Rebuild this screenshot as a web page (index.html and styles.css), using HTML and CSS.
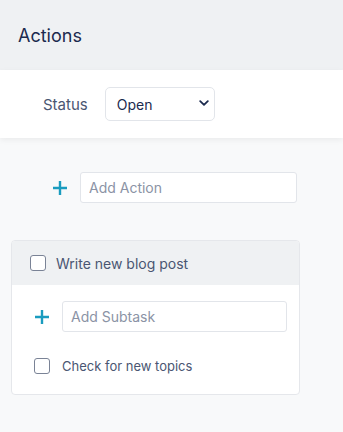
FILE: index.html
```html
<!DOCTYPE html>
<html lang="en">
<head>
<meta charset="UTF-8">
<title>Actions</title>
<meta name="viewport" content="width=device-width, initial-scale=1">
<link rel="stylesheet" href="styles.css">
</head>
<body>
<div class="page">
  <div class="header">
    <h2>Actions</h2>
  </div>

  <div class="filter-bar">
    <label for="status">Status</label>
    <div class="select-wrap">
      <select id="status">
        <option>Open</option>
        <option>Closed</option>
      </select>
      <svg class="chevron" viewBox="0 0 10 6"><path d="M1.2 1.2 5 4.8 8.8 1.2" fill="none" stroke="#1b2a4e" stroke-width="1.8" stroke-linecap="round" stroke-linejoin="round"/></svg>
    </div>
  </div>

  <div class="content">
    <div class="add-row add-action">
      <button class="plus-btn" title="Add Action">
        <svg viewBox="0 0 16 16"><path d="M8 1v14M1 8h14" stroke="#1a9cbf" stroke-width="2.4"/></svg>
      </button>
      <input type="text" placeholder="Add Action">
    </div>

    <div class="card">
      <div class="card-head">
        <span class="box"></span>
        <span class="task-title">Write new blog post</span>
      </div>
      <div class="card-body">
        <div class="add-row">
          <button class="plus-btn" title="Add Subtask">
            <svg viewBox="0 0 16 16"><path d="M8 1v14M1 8h14" stroke="#1a9cbf" stroke-width="2.4"/></svg>
          </button>
          <input type="text" placeholder="Add Subtask">
        </div>
        <div class="subtask">
          <span class="box"></span>
          <span class="subtask-title">Check for new topics</span>
        </div>
      </div>
    </div>
  </div>
</div>
</body>
</html>
```

FILE: styles.css
```css
body {
  margin: 0;
  font-family: Inter, "Noto Sans", sans-serif;
  background: #f8f9fa;
  color: #1b2a4e;
}

.header {
  background: #eff1f3;
  height: 70px;
  display: flex;
  align-items: center;
  padding: 0 18px;
}
.header h2 {
  margin: 0;
  font-size: 18px;
  font-weight: 400;
  color: #1b2a4e;
}

.filter-bar {
  background: #fff;
  height: 68px;
  display: flex;
  align-items: center;
  gap: 17px;
  padding: 0 43px;
  box-shadow: 0 2px 6px rgba(0,0,0,0.06);
  position: relative;
}
.filter-bar label {
  font-size: 15px;
  color: #4a5672;
}
.select-wrap {
  position: relative;
  width: 110px;
  height: 34px;
}
.select-wrap select {
  appearance: none;
  width: 100%;
  height: 100%;
  border: 1px solid #e2e5ea;
  border-radius: 5px;
  background: #fff;
  padding: 0 11px;
  font-family: inherit;
  font-size: 14px;
  color: #1b2a4e;
  outline: none;
}
.chevron {
  position: absolute;
  right: 6px;
  top: 13px;
  width: 10px;
  height: 6px;
  pointer-events: none;
}

.content {
  padding: 34px 46px 0 11px;
}

.add-row {
  display: flex;
  align-items: center;
  gap: 12px;
}
.add-action {
  padding-left: 41px;
  margin-bottom: 37px;
}
.plus-btn {
  width: 16px;
  height: 16px;
  padding: 0;
  border: none;
  background: none;
  cursor: pointer;
  display: flex;
  flex: none;
}
.plus-btn svg {
  width: 16px;
  height: 16px;
}
.add-row input {
  flex: 1;
  min-width: 0;
  width: 0;
  height: 31px;
  box-sizing: border-box;
  border: 1px solid #e2e5ea;
  border-radius: 3px;
  padding: 0 8px;
  font-family: inherit;
  font-size: 14px;
  color: #1b2a4e;
  outline: none;
  background: #fff;
}
.add-row input::placeholder {
  color: #8b93a5;
}

.card {
  width: 289px;
  box-sizing: border-box;
  border: 1px solid #e5e7eb;
  border-radius: 4px;
  background: #fff;
  overflow: hidden;
}
.card-head {
  background: #eff1f3;
  height: 44px;
  display: flex;
  align-items: center;
  gap: 10px;
  padding: 0 18px;
}
.box {
  width: 14px;
  height: 14px;
  border: 1px solid #7a8396;
  border-radius: 3px;
  background: #fff;
  flex: none;
}
.task-title {
  font-size: 14px;
  color: #4a5672;
}
.card-body {
  padding: 16px 12px 20px 22px;
}
.subtask {
  display: flex;
  align-items: center;
  gap: 12px;
  margin-top: 26px;
}
.subtask-title {
  font-size: 13px;
  color: #4a5672;
}
```
